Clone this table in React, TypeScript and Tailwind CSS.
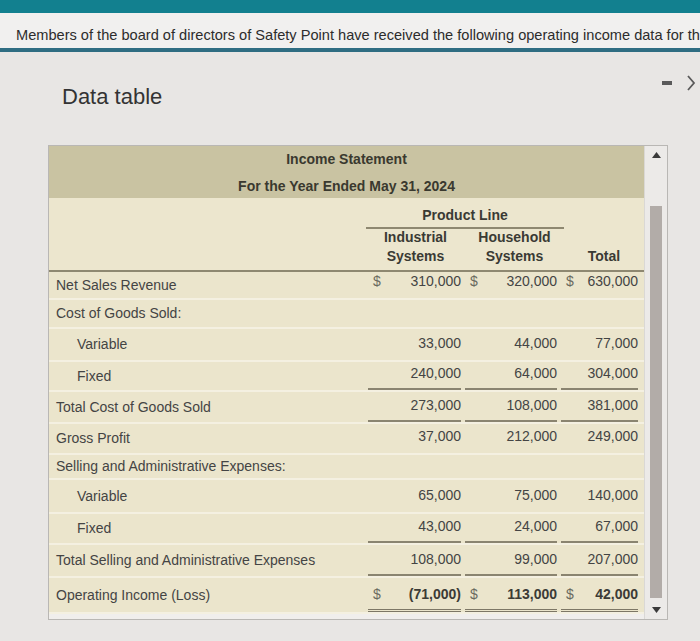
import { ReactNode } from 'react'

type Cell = { d?: boolean; v?: string; line?: 'single' | 'double' }

interface Row {
  label: string
  indent?: boolean
  h: number
  cells?: [Cell, Cell, Cell]
  bold?: boolean
}

const ROWS: Row[] = [
  {
    label: 'Net Sales Revenue',
    h: 28,
    cells: [
      { d: true, v: '310,000' },
      { d: true, v: '320,000' },
      { d: true, v: '630,000' }
    ]
  },
  { label: 'Cost of Goods Sold:', h: 29 },
  {
    label: 'Variable',
    indent: true,
    h: 33,
    cells: [{ v: '33,000' }, { v: '44,000' }, { v: '77,000' }]
  },
  {
    label: 'Fixed',
    indent: true,
    h: 30,
    cells: [
      { v: '240,000', line: 'single' },
      { v: '64,000', line: 'single' },
      { v: '304,000', line: 'single' }
    ]
  },
  {
    label: 'Total Cost of Goods Sold',
    h: 32,
    cells: [
      { v: '273,000', line: 'single' },
      { v: '108,000', line: 'single' },
      { v: '381,000', line: 'single' }
    ]
  },
  {
    label: 'Gross Profit',
    h: 31,
    cells: [{ v: '37,000' }, { v: '212,000' }, { v: '249,000' }]
  },
  { label: 'Selling and Administrative Expenses:', h: 25 },
  {
    label: 'Variable',
    indent: true,
    h: 34,
    cells: [{ v: '65,000' }, { v: '75,000' }, { v: '140,000' }]
  },
  {
    label: 'Fixed',
    indent: true,
    h: 31,
    cells: [
      { v: '43,000', line: 'single' },
      { v: '24,000', line: 'single' },
      { v: '67,000', line: 'single' }
    ]
  },
  {
    label: 'Total Selling and Administrative Expenses',
    h: 33,
    cells: [
      { v: '108,000', line: 'single' },
      { v: '99,000', line: 'single' },
      { v: '207,000', line: 'single' }
    ]
  },
  {
    label: 'Operating Income (Loss)',
    h: 36,
    bold: true,
    cells: [
      { d: true, v: '(71,000)', line: 'double' },
      { d: true, v: '113,000', line: 'double' },
      { d: true, v: '42,000', line: 'double' }
    ]
  }
]

const GROUP_W = ['w-[97px]', 'w-[96px]', 'w-[81px]']

const Amount = ({ cell, w, bold }: { cell: Cell; w: string; bold?: boolean }) => {
  const line =
    cell.line === 'double'
      ? 'border-b-[3px] border-double border-[#7d7766]'
      : cell.line === 'single'
        ? 'border-b-2 border-[#8a8470]'
        : 'border-b-2 border-transparent'
  return (
    <div className={`${w} flex h-full items-end px-[2px]`}>
      <div className={`flex w-full items-center justify-between pb-[4px] ${line}`}>
        <span className="pl-[5px] text-[#6a6a60]">{cell.d ? '$' : ''}</span>
        <span className={bold && cell.v !== undefined ? 'font-bold text-[#3c3b36]' : ''}>
          {cell.v}
        </span>
      </div>
    </div>
  )
}

const HeadCell = ({ w, children }: { w: string; children: ReactNode }) => (
  <div className={`${w} flex flex-col items-center justify-end pb-[4px] leading-[19px] font-bold`}>
    {children}
  </div>
)

export default function App() {
  return (
    <div
      className="h-[641px] w-[700px] overflow-hidden bg-[#e8e6e4] text-[#3d3d3d]"
      style={{ fontFamily: '"Liberation Sans", Arial, sans-serif' }}
    >
      <div className="h-[13px] bg-[#12808f]" />
      <div className="flex h-[35px] items-end overflow-hidden whitespace-nowrap bg-[#f1f0ef] pb-[1px] pl-[16px] text-[14.6px] text-[#2c2c2c]">
        Members of the board of directors of Safety Point have received the following operating income data for th
      </div>
      <div className="h-[4px] bg-[#2f6d82]" />

      <div className="flex h-[93px] items-start justify-between">
        <div className="pl-[62px] pt-[28px] text-[22px] text-[#333]">Data table</div>
        <div className="flex items-center gap-[14px] pr-[4px] pt-[22px]">
          <div className="h-[4px] w-[10px] bg-[#5a5a5a]" />
          <svg width="10" height="18" viewBox="0 0 10 18" fill="none">
            <path d="M2 2 L8 9 L2 16" stroke="#5a5a5a" strokeWidth="1.8" />
          </svg>
        </div>
      </div>

      <div className="ml-[48px] flex h-[475px] w-[620px] border border-[#b9b7b4] bg-[#f0eeec]">
        <div className="w-[595px] text-[14px]">
          <div className="flex h-[52px] flex-col items-center bg-[#c9c3a2] font-bold leading-[27px] text-[#3a392f]">
            <div>Income Statement</div>
            <div>For the Year Ended May 31, 2024</div>
          </div>

          <div className="bg-[#ebe5cc]">
            <div className="flex h-[74px] border-b-2 border-[#8e8871] bg-[#ece6ce] text-[#3a3a34]">
              <div className="w-[317px]" />
              <div className="flex flex-col">
                <div className="flex h-[31px] w-[198px] items-end justify-center border-b-2 border-[#8e8871] pb-[1px] font-bold">
                  Product Line
                </div>
                <div className="flex h-[41px]">
                  <HeadCell w="w-[99px]">
                    <span>Industrial</span>
                    <span>Systems</span>
                  </HeadCell>
                  <HeadCell w="w-[99px]">
                    <span>Household</span>
                    <span>Systems</span>
                  </HeadCell>
                </div>
              </div>
              <HeadCell w="w-[80px]">
                <span>Total</span>
              </HeadCell>
            </div>

            {ROWS.map((r, i) => (
              <div
                key={i}
                className="flex border-b-2 border-[#f4f0e1] text-[#444]"
                style={{ height: r.h }}
              >
                <div
                  className={`flex w-[317px] items-center ${r.indent ? 'pl-[28px]' : 'pl-[7px]'}`}
                >
                  {r.label}
                </div>
                {r.cells
                  ? r.cells.map((c, j) => (
                      <Amount key={j} cell={c} w={GROUP_W[j]} bold={r.bold} />
                    ))
                  : null}
              </div>
            ))}
          </div>
        </div>

        <div className="flex w-[24px] flex-col items-center border-l border-[#dad8d5] bg-[#eceae8] py-[6px]">
          <svg width="9" height="6" viewBox="0 0 9 6">
            <path d="M0 6 L4.5 0 L9 6 Z" fill="#3a3a3a" />
          </svg>
          <div className="mt-[48px] h-[392px] w-[12px] bg-[#b2aca8]" />
          <div className="flex-1" />
          <svg width="9" height="6" viewBox="0 0 9 6">
            <path d="M0 0 L4.5 6 L9 0 Z" fill="#3a3a3a" />
          </svg>
        </div>
      </div>
    </div>
  )
}
